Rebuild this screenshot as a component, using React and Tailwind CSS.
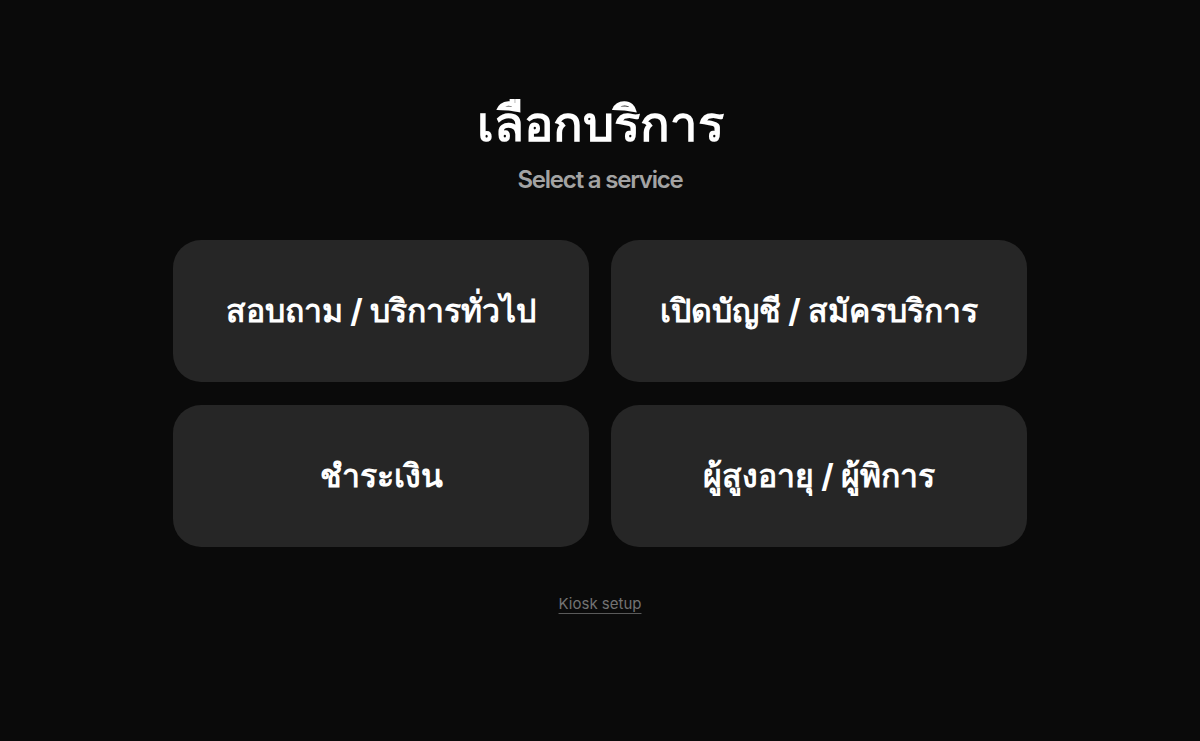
export default function App() {
  const items = [
    "สอบถาม / บริการทั่วไป",
    "เปิดบัญชี / สมัครบริการ",
    "ชำระเงิน",
    "ผู้สูงอายุ / ผู้พิการ",
  ];
  return (
    <div
      className="min-h-[741px] w-full bg-[#0a0a0a] flex flex-col items-center pt-[92px]"
      style={{ fontFamily: "Inter, 'Noto Sans', sans-serif" }}
    >
      <h1 className="text-[49px] leading-[64px] font-bold text-white">เลือกบริการ</h1>
      <p className="text-[24px] leading-[32px] font-semibold text-[#a3a3a3] tracking-[-0.05em] mt-[8px]">
        Select a service
      </p>
      <div className="grid grid-cols-2 gap-x-[22px] gap-y-[23px] mt-[44px] w-[854px]">
        {items.map((t) => (
          <button
            key={t}
            className="h-[142px] rounded-[28px] bg-[#262626] text-white text-[32px] font-bold flex items-center justify-center"
          >
            {t}
          </button>
        ))}
      </div>
      <a className="mt-[46px] text-[15px] text-[#737373] underline underline-offset-4 decoration-[#5a5a5a]">
        Kiosk setup
      </a>
    </div>
  );
}
